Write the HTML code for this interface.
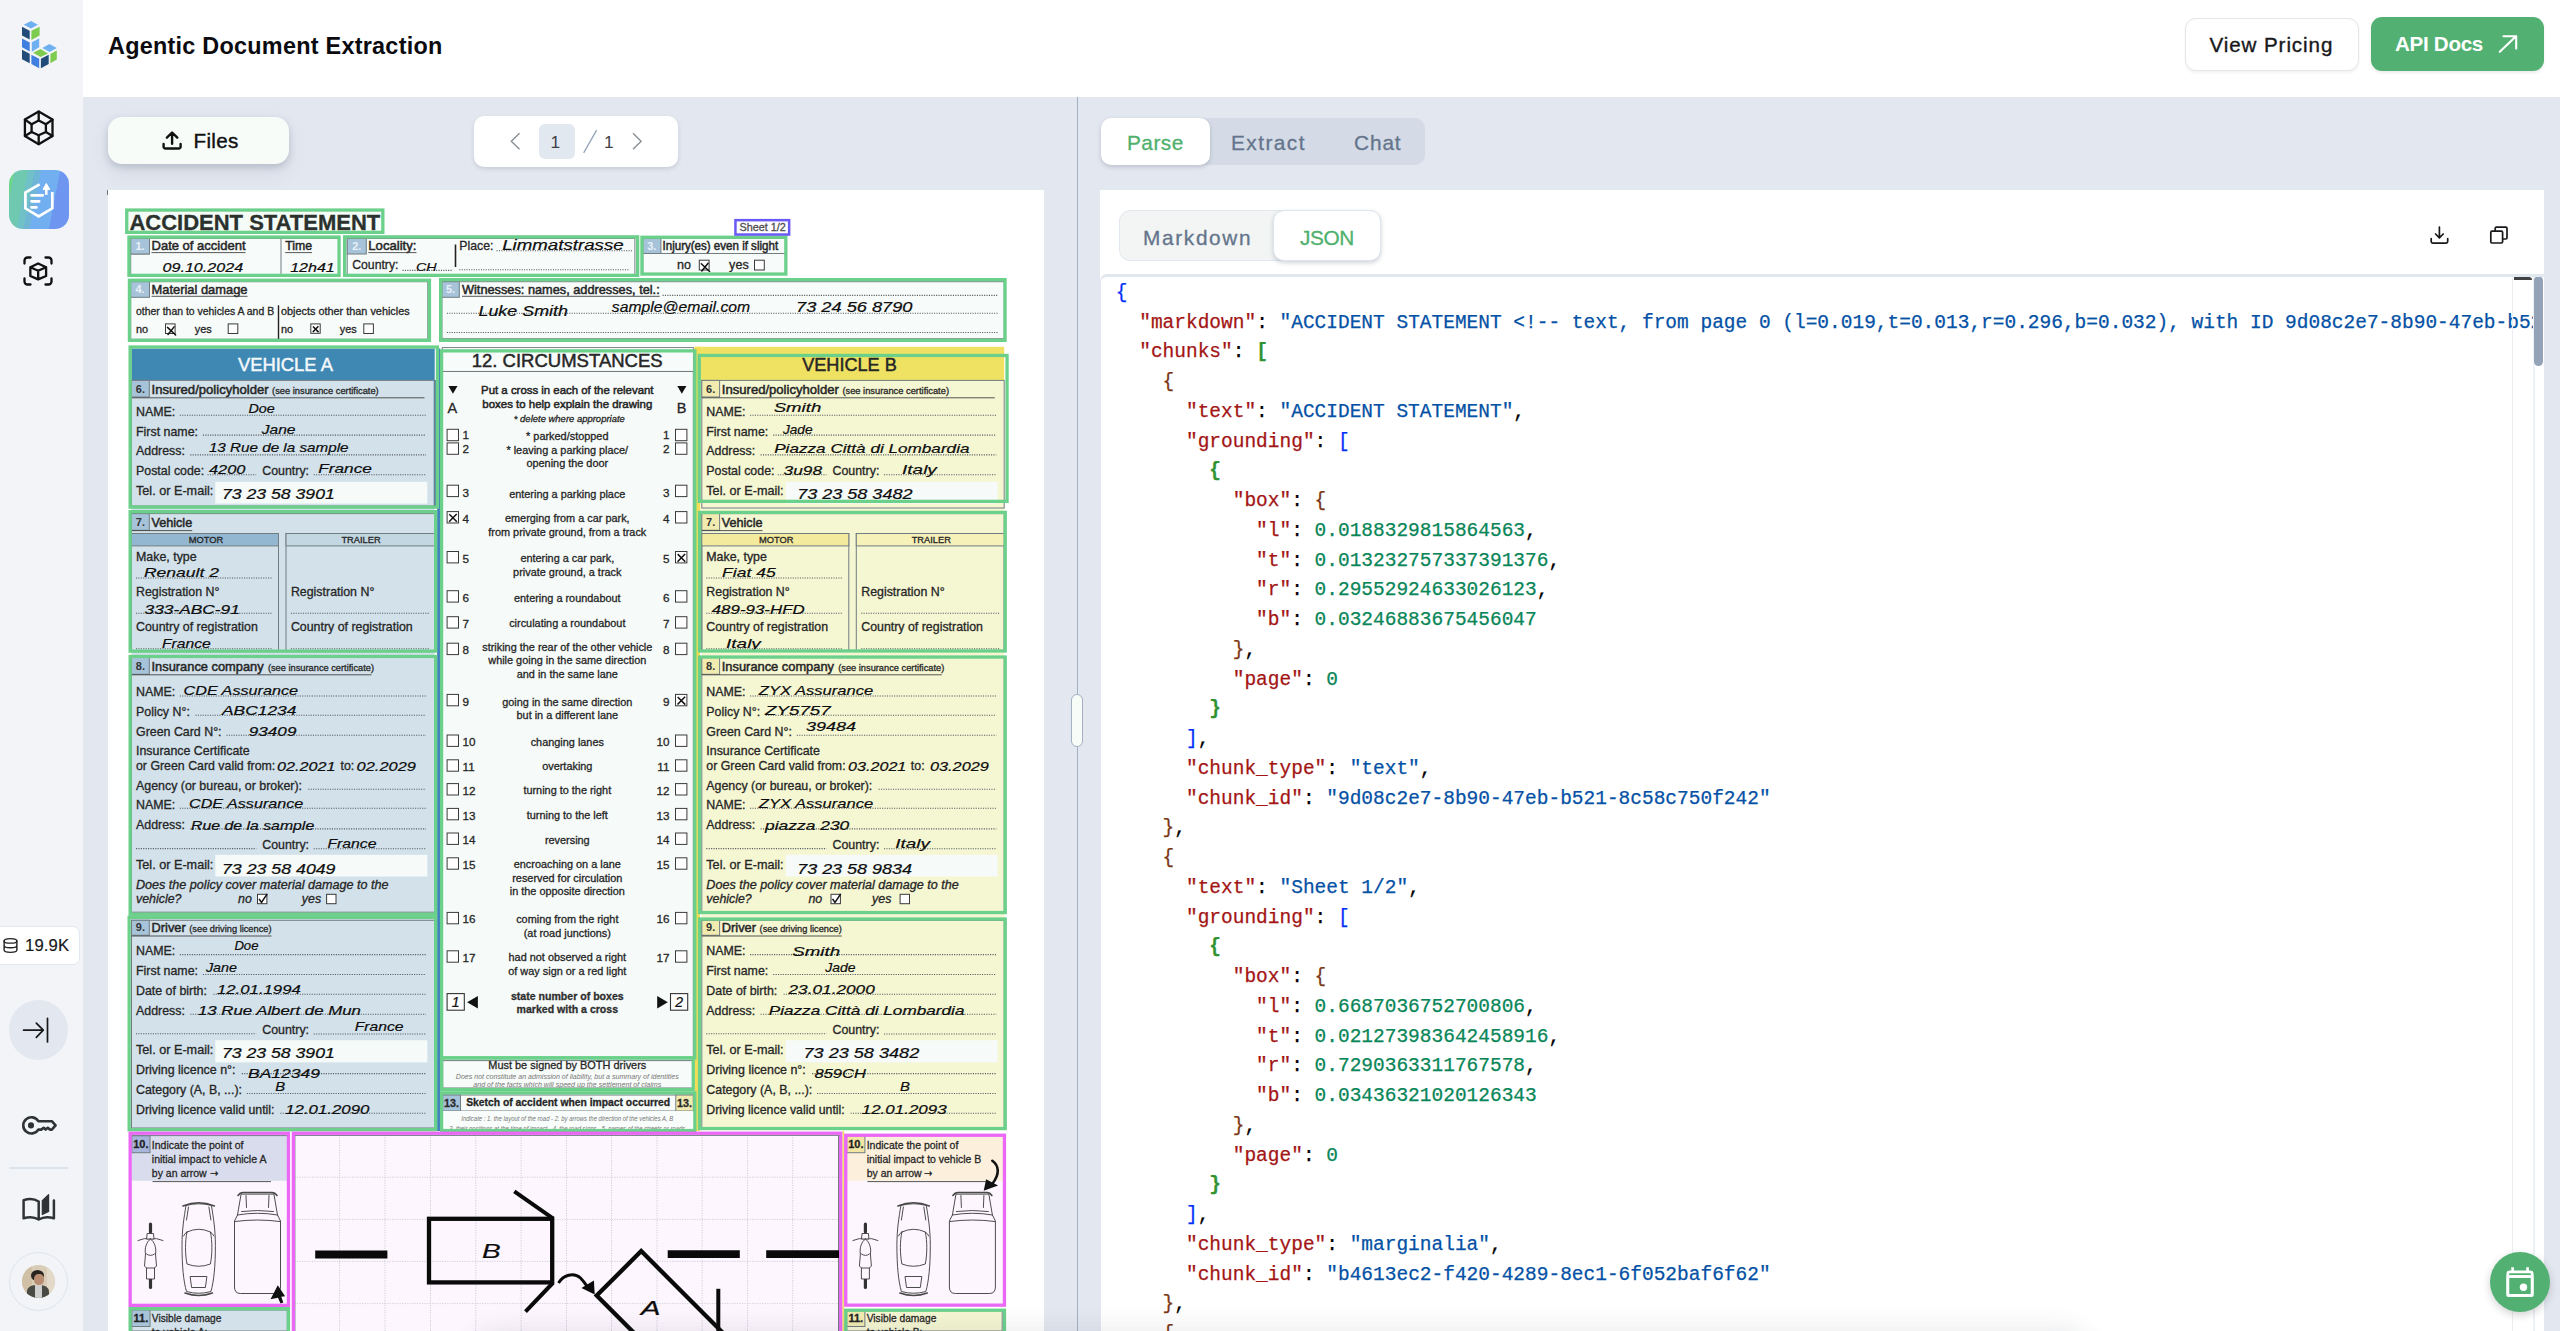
<!DOCTYPE html><html><head><meta charset="utf-8"><title>Agentic Document Extraction</title><style>
*{box-sizing:border-box;margin:0;padding:0}
html,body{width:2560px;height:1331px;overflow:hidden;background:#e3e7f0;font-family:"Liberation Sans",sans-serif;color:#111}
.a{position:absolute}
#side{left:0;top:0;width:83.2px;height:1331px;background:#f2f4f8}
#hdr{left:83.2px;top:0;width:2477px;height:96.7px;background:#fff}
#title{left:108px;top:32.2px;font-weight:700;font-size:23.4px;line-height:28px;letter-spacing:0.26px;color:#0b0b0f;white-space:nowrap}
.btn{border-radius:11px;font-size:20.6px;line-height:24px;white-space:nowrap}
#vp{left:2184.5px;top:17.5px;width:174.5px;height:53px;background:#fff;border:1.6px solid #e4e4ea;box-shadow:0 1.5px 3px rgba(0,0,0,.05)}
#vp span{left:24px;top:14.6px;color:#18181b;letter-spacing:.9px;-webkit-text-stroke:.35px #18181b}
#api{left:2371px;top:17px;width:172.5px;height:53.5px;background:#52b172;box-shadow:0 1.5px 3px rgba(0,0,0,.08)}
#api span{left:24px;top:14.8px;color:#fff;font-weight:700;letter-spacing:-.3px}
#files{left:107.5px;top:117px;width:181px;height:47px;border-radius:14px;background:#f7fcf9;box-shadow:0 3px 7px rgba(71,85,105,.22),0 8px 18px rgba(71,85,105,.10)}
#files span{left:86px;top:10.4px;font-size:20.6px;line-height:28px;color:#111;letter-spacing:.35px;-webkit-text-stroke:.4px #111}
#pager{left:473.5px;top:116px;width:204px;height:51px;border-radius:10px;background:#fff;box-shadow:0 2px 4px rgba(71,85,105,.18)}
#pgb{left:65.5px;top:7.5px;width:35.5px;height:35.5px;border-radius:6px;background:#e2e8f0}
.pn{font-size:17.4px;line-height:20px;color:#3f3f46;top:15.6px}
#tabs{left:1101px;top:117.5px;width:324px;height:47.5px;border-radius:10px;background:#d4dbe6}
#tabs .on{left:0;top:0;width:109px;height:47.5px;border-radius:10px;background:#fff;box-shadow:0 2px 4px rgba(71,85,105,.25)}
.tb{font-size:20.8px;line-height:24px;top:13.4px;color:#64748b;-webkit-text-stroke:.3px #64748b;white-space:nowrap}
#panel{left:1100px;top:190px;width:1443.5px;height:1141px;background:#fff;overflow:hidden}
#tog{left:18.5px;top:20px;width:262px;height:51px;border-radius:11px;background:#f2f5f4;border:1.5px solid #e2e8f0}
#tog .on{left:153px;top:-1.5px;width:108px;height:51px;border-radius:11px;background:#fff;border:1.5px solid #dfe5ee;box-shadow:0 2px 4px rgba(71,85,105,.25)}
#ed{left:0;top:84px;width:1443.5px;height:1060px;border-top:3px solid #e2e8f0;border-left:1.6px solid #e2e8f0;border-radius:7px 0 0 0;background:#fff;overflow:hidden}
pre{position:absolute;left:14.8px;top:1.9px;font-family:"Liberation Mono",monospace;font-size:19.49px;line-height:29.755px;color:#000;white-space:pre;-webkit-text-stroke:.25px}
.k{color:#a31515}.s{color:#0451a5}.n{color:#098658}.b1{color:#0431fa}.b2{color:#319331}.b3{color:#7b3814}
#doc{left:107.5px;top:190px;width:936.5px;height:1141px;background:#fff;overflow:hidden}
</style></head><body><div id="side" class="a"><svg class="a" style="left:0;top:0" width="83" height="96" viewBox="0 0 83 96"><polygon points="23.7,24.7 31,21 37.9,24.7 31,28.4" fill="#6fb0f0"/><polygon points="22,26.7 29.7,30.8 29.7,39.6 22,35.5" fill="#214b78"/><polygon points="31.4,30.8 39.6,26.7 39.6,35.5 31.4,39.9" fill="#7dcb4f"/><polygon points="22,38.5 29.7,42.6 29.7,51.4 22,47.3" fill="#3f7fe0"/><polygon points="31.8,42.3 39.2,38.5 39.2,47.3 31.8,51.7" fill="#6fb0f0"/><polygon points="22,49.7 29.7,53.8 29.7,63.2 22,59.2" fill="#214b78"/><polygon points="33.1,52.7 40.6,49 48,53.4 40.6,57.1" fill="#7dcb4f"/><polygon points="31.4,54.8 39.2,58.8 39.2,68.3 31.4,63.9" fill="#3f7fe0"/><polygon points="40.9,58.8 48.7,54.8 48.7,63.9 40.9,68.3" fill="#214b78"/><polygon points="42.3,48 49.4,43.9 56.8,48 49.7,52.1" fill="#6fb0f0"/><polygon points="50.4,54.1 56.8,50.4 56.8,59.5 50.4,63.2" fill="#7dcb4f"/></svg><svg class="a" style="left:0;top:96px" width="83" height="64" viewBox="0 96 83 64" fill="none" stroke="#111" stroke-width="2.3" stroke-linejoin="round" stroke-linecap="round">
<polygon points="38.7,111.6 52.5,119.6 52.5,136 38.7,144.2 24.9,136 24.9,119.6"/>
<polygon points="38.7,120.6 45.9,124.3 45.9,132 38.7,135.3 31.6,132 31.6,124.3"/>
<path d="M38.7 111.6V120.6M52.5 119.6L45.9 124.3M52.5 136L45.9 132M38.7 144.2V135.3M24.9 136L31.6 132M24.9 119.6L31.6 124.3"/></svg><div class="a" style="left:9px;top:169.5px;width:59.5px;height:59.5px;border-radius:14px;background:linear-gradient(101deg,#6dd58a 0,#6dd58a 7.7%,#6fc9b1 8.2%,#6fc9b1 26.6%,#70c0c8 27.1%,#70c0c8 35.9%,#6fb5d5 36.4%,#6fb5d5 44.7%,#72aff0 45.2%,#72aff0 71.5%,#6e95f0 72%,#6e95f0 100%)"></div>
<svg class="a" style="left:9px;top:169.5px" width="60" height="60" viewBox="9 169.5 60 60" fill="none" stroke="#fff" stroke-width="2.7" stroke-linecap="round" stroke-linejoin="miter">
<path d="M39.6 183.9L25.4 192V207.8L38.7 216L52.3 207.8V191.6" stroke-linecap="butt"/>
<path d="M31.5 194.8H42.8M31.5 200.8H39.2M31.5 206.9H36.4"/>
<path d="M46.3 194.3V187" stroke-width="2.6" stroke-linecap="butt"/>
<path d="M43.2 188.6L46.3 183L49.6 188.6Z" fill="#fff" stroke-width="1" stroke-linejoin="round"/></svg><svg class="a" style="left:20.4px;top:252.6px" width="36" height="36" viewBox="0 0 24 24" fill="none" stroke="#111" stroke-width="1.55" stroke-linecap="round" stroke-linejoin="round">
<path d="M3 7V5a2 2 0 0 1 2-2h2M17 3h2a2 2 0 0 1 2 2v2M21 17v2a2 2 0 0 1-2 2h-2M7 21H5a2 2 0 0 1-2-2v-2"/>
<path d="M12.1 7L17.4 9.5V15.3L12.1 17.6L6.9 15.3V9.5ZM6.9 9.5L12.1 11.8L17.4 9.5M12.1 11.8V17.6"/></svg><div class="a" style="left:-8px;top:926px;width:87.5px;height:38.5px;background:#fff;border:1.5px solid #e2e8f0;border-radius:7px"></div>
<svg class="a" style="left:2px;top:936.5px" width="17" height="17" viewBox="0 0 24 24" fill="none" stroke="#222" stroke-width="2" stroke-linecap="round" stroke-linejoin="round"><ellipse cx="12" cy="5.5" rx="9" ry="3.2"/><path d="M3 5.5v13c0 1.8 4 3.2 9 3.200s9-1.400 9-3.200v-13M3 12c0 1.800 4 3.200 9 3.200s9-1.400 9-3.200"/></svg>
<div class="a" style="left:25px;top:935.5px;font-size:16.7px;line-height:20px;color:#18181b;letter-spacing:.1px;-webkit-text-stroke:.2px #18181b">19.9K</div><div class="a" style="left:8.8px;top:1000.4px;width:59.6px;height:59.6px;border-radius:50%;background:#e3e8f0"></div>
<svg class="a" style="left:18px;top:1012px" width="40" height="36" viewBox="18 1012 40 36" fill="none" stroke="#18181b" stroke-width="1.7" stroke-linecap="round" stroke-linejoin="round"><path d="M23.6 1030.200H43.200M36.300 1023.100L43.300 1030.200L36.300 1037.300M47.500 1018.300V1042"/></svg><svg class="a" style="left:18px;top:1110px" width="44" height="32" viewBox="18 1110 44 32" fill="none" stroke="#2f3336" stroke-width="2.6" stroke-linejoin="round" stroke-linecap="round">
<path d="M38.300 1121.200A8.100 8.100 0 1 0 38.300 1129.600L41.500 1129.600L43.600 1127.800L45.700 1129.600L47.800 1127.800L49.900 1129.600H51.800L55.600 1125.400L51.800 1121.200Z"/><circle cx="31" cy="1125.400" r="2.300" fill="#2f3336" stroke-width="1.500"/></svg><div class="a" style="left:9px;top:1167.2px;width:59.3px;height:1.6px;background:#dde3ea"></div><svg class="a" style="left:18px;top:1188px" width="44" height="40" viewBox="18 1188 44 40" fill="none" stroke="#2f3336" stroke-width="2.5" stroke-linejoin="round" stroke-linecap="round">
<path d="M38.700 1219.500C34 1216.600 28.500 1216.700 23.600 1218.300V1200.300C28.500 1198.600 34 1198.600 38.700 1201.500ZM38.700 1219.500C43.400 1216.600 49 1216.700 53.900 1218.300V1200.600"/>
<path d="M42.300 1200.700L48.600 1194.600V1211.500L42.300 1214.500Z" fill="#2f3336" stroke-width="1.200"/></svg><div class="a" style="left:9px;top:1252px;width:59.3px;height:59.3px;border-radius:50%;border:1.5px solid #dfe5ec"></div>
<div class="a" style="left:21.8px;top:1264.800px;width:33.600px;height:33.600px;border-radius:50%;overflow:hidden;background:#d9cdb8">
<div class="a" style="left:0;top:0;width:10px;height:34px;background:#cfc0a6"></div>
<div class="a" style="left:25px;top:0;width:9px;height:34px;background:#e3d9c8"></div>
<div class="a" style="left:9px;top:5px;width:13px;height:11px;border-radius:50%;background:#2a2420"></div>
<div class="a" style="left:12.500px;top:9.500px;width:9.500px;height:11px;border-radius:45%;background:#b98d72"></div>
<div class="a" style="left:5px;top:20px;width:22px;height:16px;border-radius:40% 40% 0 0;background:#4a4a44"></div>
<div class="a" style="left:13px;top:20px;width:7px;height:14px;background:#cfcfcd"></div></div></div><div id="hdr" class="a"></div><div id="title" class="a">Agentic Document Extraction</div><div id="vp" class="a btn"><span class="a">View Pricing</span></div><div id="api" class="a btn"><span class="a">API Docs</span><svg class="a" style="left:126px;top:17px" width="22" height="20" viewBox="2497 34 22 20" fill="none" stroke="#fff" stroke-width="2.1" stroke-linecap="round" stroke-linejoin="round"><path d="M2499.800 51.800L2516 36.200M2503.500 36.200H2516.200V48.600"/></svg></div><div id="files" class="a"><svg class="a" style="left:53.500px;top:12.500px" width="22" height="21" viewBox="161 129.500 22 21" fill="none" stroke="#111" stroke-width="2.4" stroke-linecap="round" stroke-linejoin="round"><path d="M163.600 143.500V146.200A1.800 1.800 0 0 0 165.400 148H178.800A1.800 1.800 0 0 0 180.600 146.200V143.500M172.100 143.300V132.200M166.900 137.200L172.100 132L177.300 137.200"/></svg><span class="a">Files</span></div><div id="pager" class="a"><div id="pgb" class="a"></div>
<svg class="a" style="left:0;top:0" width="204" height="51" viewBox="473.500 116 204 51" fill="none" stroke="#8a8f96" stroke-width="1.400" stroke-linecap="square"><path d="M518.500 133.800L510.800 141.300L518.500 148.800M633 133.800L640.600 141.300L633 148.800"/><path d="M583.500 152.300L595.800 130.700" stroke="#94a3b8" stroke-width="1.300"/></svg>
<span class="a pn" style="left:77px">1</span><span class="a pn" style="left:130.500px">1</span></div><div id="tabs" class="a"><div class="a on"></div><span class="a tb" style="left:26px;color:#4fb06d;-webkit-text-stroke:.3px #4fb06d;letter-spacing:.5px">Parse</span><span class="a tb" style="left:130px;letter-spacing:1.450px">Extract</span><span class="a tb" style="left:253px;letter-spacing:.9px">Chat</span></div><div class="a" style="left:1076.700px;top:96.500px;width:1.500px;height:1240px;background:#a3b1c4"></div><div class="a" style="left:1071px;top:693.500px;width:11.500px;height:53px;border-radius:6px;background:#f7fcf9;border:1.300px solid #a3b1c4"></div><svg id="doc" class="a" width="936.500" height="1141" viewBox="107.500 190 936.500 1141"><style>text{font-family:"Liberation Sans",sans-serif;fill:#262626;stroke:#262626;stroke-width:.3px}
.m{stroke-width:.5px}.b{font-weight:700}.b2{font-weight:700;fill:#333}.w{fill:#f4f8fb;stroke:#f4f8fb;stroke-width:.45px}.t{stroke-width:.45px}.i{font-style:italic}.ig{font-style:italic;fill:#777;stroke:none}
.h{font-style:italic;fill:#0d0d0d;stroke:#0d0d0d;stroke-width:.2px}
.d{stroke:#565b60;stroke-width:1.100;stroke-dasharray:1.100 1.300;fill:none}
.g{stroke:#cfcfd6;stroke-width:1;stroke-dasharray:1.200 1.300;fill:none}</style><text x="128.9" y="230.3" font-size="22.6" class="b" textLength="250.9" lengthAdjust="spacingAndGlyphs">ACCIDENT STATEMENT</text><text x="739" y="231.4" font-size="11.4" textLength="46.4" lengthAdjust="spacingAndGlyphs" style="fill:#4d4d4d;stroke:#4d4d4d">Sheet 1/2</text><rect x="130.2" y="238.4" width="208.3" height="36.6" fill="#f7fbf9" stroke="#727d82" stroke-width="1"/><path d="M280.5 238.4L280.5 275" stroke="#727d82" stroke-width="1"/><path d="M130.2 254L149 254" stroke="#727d82" stroke-width="1"/><rect x="130.2" y="238.4" width="18.8" height="15.6" fill="#a6c3da" stroke="#727d82" stroke-width="1"/><text x="139.6" y="250" font-size="11" class="b" text-anchor="middle" style="fill:#e9f1f8;stroke:none">1.</text><text x="151" y="250.2" font-size="13" class="m" textLength="94" lengthAdjust="spacingAndGlyphs">Date of accident</text><path d="M151 252.6L245 252.6" stroke="#444" stroke-width="0.9"/><text x="284.7" y="250.2" font-size="13" class="m" textLength="26.8" lengthAdjust="spacingAndGlyphs">Time</text><path d="M284.7 252.6L311.5 252.6" stroke="#444" stroke-width="0.9"/><text x="162" y="271.8" font-size="12.9" class="h" textLength="80.6" lengthAdjust="spacingAndGlyphs">09.10.2024</text><text x="289.7" y="271.8" font-size="12.9" class="h" textLength="44.6" lengthAdjust="spacingAndGlyphs">12h41</text><rect x="346.7" y="238.4" width="287.7" height="36.6" fill="#f7fbf9" stroke="#727d82" stroke-width="1"/><rect x="346.7" y="238.4" width="19.1" height="15.6" fill="#a6c3da" stroke="#727d82" stroke-width="1"/><text x="356.25" y="250" font-size="11" class="b" text-anchor="middle" style="fill:#e9f1f8;stroke:none">2.</text><text x="367.8" y="250.2" font-size="13" class="m" textLength="48.2" lengthAdjust="spacingAndGlyphs">Locality:</text><path d="M367.8 252.6L416 252.6" stroke="#444" stroke-width="0.9"/><path d="M455 244.5L455 267" stroke="#222" stroke-width="1.6"/><text x="458.8" y="250.2" font-size="12.6" textLength="34.2" lengthAdjust="spacingAndGlyphs">Place:</text><path d="M496 250.8H632" class="d"/><text x="501.7" y="250.4" font-size="14" class="h" textLength="121.5" lengthAdjust="spacingAndGlyphs">Limmatstrasse</text><text x="351.7" y="269.4" font-size="12.6" textLength="46.3" lengthAdjust="spacingAndGlyphs">Country:</text><path d="M402 270.4H452" class="d"/><text x="415.4" y="271.4" font-size="11.5" class="h" textLength="20.6" lengthAdjust="spacingAndGlyphs">CH</text><path d="M458.8 269.8H628" class="d"/><rect x="642.3" y="238.3" width="142.7" height="35.5" fill="#f7fbf9" stroke="#727d82" stroke-width="1"/><path d="M642.3 253.5L785 253.5" stroke="#727d82" stroke-width="1"/><rect x="642.3" y="238.3" width="18.1" height="15.2" fill="#a6c3da" stroke="#727d82" stroke-width="1"/><text x="651.35" y="249.5" font-size="11" class="b" text-anchor="middle" style="fill:#e9f1f8;stroke:none">3.</text><text x="662" y="250.2" font-size="12.6" class="m" textLength="115.6" lengthAdjust="spacingAndGlyphs">Injury(es) even if slight</text><text x="676.5" y="269.3" font-size="12.6">no</text><rect x="698.8" y="260.2" width="9.8" height="9.8" fill="#fdfefd" stroke="#3a3a3a" stroke-width="1"/><path d="M700.8 263.7L709.1 271.5M707.6 263.2L701.3 271" stroke="#111" stroke-width="1.5" stroke-linecap="round"/><text x="728.6" y="269.3" font-size="12.6">yes</text><rect x="754" y="260.2" width="9.8" height="9.8" fill="#fdfefd" stroke="#3a3a3a" stroke-width="1"/><rect x="130.2" y="281.7" width="297.1" height="57.6" fill="#f7fbf9" stroke="#727d82" stroke-width="1"/><rect x="130.2" y="281.7" width="18.8" height="15.6" fill="#a6c3da" stroke="#727d82" stroke-width="1"/><text x="139.6" y="293.3" font-size="11" class="b" text-anchor="middle" style="fill:#e9f1f8;stroke:none">4.</text><text x="151" y="293.7" font-size="13" class="m" textLength="96" lengthAdjust="spacingAndGlyphs">Material damage</text><path d="M151 296.3L247 296.3" stroke="#444" stroke-width="0.9"/><text x="135.5" y="314.8" font-size="10.9" textLength="138.1" lengthAdjust="spacingAndGlyphs">other than to vehicles A and B</text><path d="M278 305.3L278 339.3" stroke="#222" stroke-width="1.4"/><text x="280.5" y="314.8" font-size="10.9" textLength="128.7" lengthAdjust="spacingAndGlyphs">objects other than vehicles</text><text x="135.5" y="333.3" font-size="10.9">no</text><rect x="165" y="323.9" width="9.6" height="9.6" fill="#fdfefd" stroke="#3a3a3a" stroke-width="1"/><path d="M167 327.4L175.1 335M173.6 326.9L167.5 334.5" stroke="#111" stroke-width="1.5" stroke-linecap="round"/><text x="194.2" y="333.3" font-size="10.9">yes</text><rect x="227.7" y="323.9" width="9.6" height="9.6" fill="#fdfefd" stroke="#3a3a3a" stroke-width="1"/><text x="280.5" y="333.3" font-size="10.9">no</text><rect x="310.3" y="323.9" width="9.4" height="9.4" fill="#fdfefd" stroke="#3a3a3a" stroke-width="1"/><path d="M312.5 326.5L318.1 332.1M317.9 326.3L312.3 332.1" stroke="#111" stroke-width="1.5"/><text x="339.3" y="333.3" font-size="10.9">yes</text><rect x="363.3" y="323.9" width="9.6" height="9.6" fill="#fdfefd" stroke="#3a3a3a" stroke-width="1"/><rect x="441.4" y="281.7" width="562.3" height="57" fill="#f7fbf9" stroke="#727d82" stroke-width="1"/><rect x="441.4" y="281.7" width="17.4" height="15.6" fill="#a6c3da" stroke="#727d82" stroke-width="1"/><text x="450.1" y="293.3" font-size="11" class="b" text-anchor="middle" style="fill:#e9f1f8;stroke:none">5.</text><text x="461.5" y="293.7" font-size="13" class="m" textLength="197.7" lengthAdjust="spacingAndGlyphs">Witnesses: names, addresses, tel.:</text><path d="M461.5 296.3L659.2 296.3" stroke="#444" stroke-width="0.9"/><path d="M662 295.4H997.5" class="d"/><path d="M446.4 313.2H997.5" class="d"/><path d="M446.4 332.5H997.5" class="d"/><text x="478" y="316.3" font-size="13.8" class="h" textLength="89.4" lengthAdjust="spacingAndGlyphs">Luke Smith</text><text x="611.3" y="311.5" font-size="13.8" class="h" textLength="138.3" lengthAdjust="spacingAndGlyphs">sample@email.com</text><text x="795.5" y="311.5" font-size="14" class="h" textLength="116.5" lengthAdjust="spacingAndGlyphs">73 24 56 8790</text><rect x="131" y="380" width="303" height="748" fill="#d2e1ea"/><rect x="131" y="348.5" width="303.2" height="31.5" fill="#4088b4"/><text x="284.9" y="371.1" font-size="18.2" text-anchor="middle" class="w" textLength="95" lengthAdjust="spacingAndGlyphs">VEHICLE A</text><rect x="436.6" y="348.5" width="3" height="782.5" fill="#3f7fc0"/><rect x="433.2" y="380" width="2.2" height="127" fill="#3b7fb0"/><rect x="131" y="380.4" width="303" height="125.6" fill="none" stroke="#727d82" stroke-width="1"/><rect x="131" y="380.4" width="17.8" height="16.6" fill="#a6c3da" stroke="#727d82" stroke-width="1"/><text x="139.9" y="393" font-size="11" class="b" text-anchor="middle" style="fill:#333;stroke:none">6.</text><text x="151" y="394.2" font-size="13" class="m" textLength="117.1" lengthAdjust="spacingAndGlyphs">Insured/policyholder</text><text x="271.6" y="394" font-size="9.3" textLength="106.6" lengthAdjust="spacingAndGlyphs">(see insurance certificate)</text><path d="M131 397.8L424 397.8" stroke="#444" stroke-width="0.9"/><text x="135.5" y="415.6" font-size="12.4">NAME:</text><path d="M179.3 415.2H425.5" class="d"/><text x="135.5" y="435.5" font-size="12.4">First name:</text><path d="M202.4 435.1H425.5" class="d"/><text x="135.5" y="455.3" font-size="12.4">Address:</text><path d="M189.8 454.9H425.5" class="d"/><text x="135.5" y="475.1" font-size="12.4">Postal code:</text><path d="M207 474.7H255.7" class="d"/><text x="261.7" y="475.1" font-size="12.4">Country:</text><path d="M313.2 474.7H425.5" class="d"/><text x="135.5" y="494.5" font-size="12.4" textLength="77.3" lengthAdjust="spacingAndGlyphs">Tel. or E-mail:</text><rect x="214.8" y="481.8" width="212" height="21.8" fill="#f6fbf9"/><rect x="131" y="513.6" width="303" height="137.2" fill="none" stroke="#727d82" stroke-width="1"/><rect x="131" y="513.6" width="17.8" height="16.7" fill="#a6c3da" stroke="#727d82" stroke-width="1"/><text x="139.9" y="526.3" font-size="11" class="b" text-anchor="middle" style="fill:#333;stroke:none">7.</text><text x="151" y="526.9" font-size="13" class="m" textLength="40.7" lengthAdjust="spacingAndGlyphs">Vehicle</text><path d="M131 530.6L191.7 530.6" stroke="#444" stroke-width="0.9"/><rect x="131" y="533.5" width="147" height="117.3" fill="none" stroke="#727d82" stroke-width="1"/><rect x="131" y="533.5" width="147" height="12.4" fill="#93b6d1" stroke="#727d82" stroke-width="1"/><rect x="285.5" y="533.5" width="148.5" height="117.3" fill="none" stroke="#727d82" stroke-width="1"/><rect x="285.5" y="533.5" width="148.5" height="12.4" fill="#c3d7e3" stroke="#727d82" stroke-width="1"/><text x="205.5" y="543.4" font-size="9" text-anchor="middle" textLength="34.5" lengthAdjust="spacingAndGlyphs">MOTOR</text><text x="360.5" y="543.4" font-size="9" text-anchor="middle" textLength="39.2" lengthAdjust="spacingAndGlyphs">TRAILER</text><text x="135.5" y="560.7" font-size="12.4">Make, type</text><path d="M135.5 578H271" class="d"/><text x="135.5" y="596" font-size="12.4">Registration N°</text><path d="M135.5 613.3H271" class="d"/><text x="135.5" y="631.4" font-size="12.4" textLength="121.8" lengthAdjust="spacingAndGlyphs">Country of registration</text><path d="M135.5 648.8H271" class="d"/><text x="290.4" y="596" font-size="12.4">Registration N°</text><path d="M290.4 613.3H429" class="d"/><text x="290.4" y="631.4" font-size="12.4" textLength="121.8" lengthAdjust="spacingAndGlyphs">Country of registration</text><path d="M290.4 648.8H429" class="d"/><rect x="131" y="657.5" width="303" height="254.7" fill="none" stroke="#727d82" stroke-width="1"/><rect x="131" y="657.5" width="17.8" height="16.8" fill="#a6c3da" stroke="#727d82" stroke-width="1"/><text x="139.9" y="670.3" font-size="11" class="b" text-anchor="middle" style="fill:#333;stroke:none">8.</text><text x="151" y="671.2" font-size="13" class="m" textLength="112.2" lengthAdjust="spacingAndGlyphs">Insurance company</text><text x="267.4" y="671" font-size="9.3" textLength="106.1" lengthAdjust="spacingAndGlyphs">(see insurance certificate)</text><path d="M131 674.8L371 674.8" stroke="#444" stroke-width="0.9"/><text x="135.5" y="696.4" font-size="12.4">NAME:</text><path d="M179.3 696H425.5" class="d"/><text x="135.5" y="715.7" font-size="12.4">Policy N°:</text><path d="M195 715.3H425.5" class="d"/><text x="135.5" y="735.6" font-size="12.4">Green Card N°:</text><path d="M226 735.2H425.5" class="d"/><text x="135.5" y="755.4" font-size="12.4">Insurance Certificate</text><text x="135.5" y="769.8" font-size="12.4" textLength="139.3" lengthAdjust="spacingAndGlyphs">or Green Card valid from:</text><text x="340" y="769.8" font-size="12.4">to:</text><text x="135.5" y="789.6" font-size="12.4" textLength="166" lengthAdjust="spacingAndGlyphs">Agency (or bureau, or broker):</text><path d="M307.8 789.2H425.5" class="d"/><text x="135.5" y="808.7" font-size="12.4">NAME:</text><path d="M179.3 808.3H425.5" class="d"/><text x="135.5" y="829.3" font-size="12.4">Address:</text><path d="M189.8 828.9H425.5" class="d"/><path d="M135.5 848.6H255.7" class="d"/><text x="261.7" y="849.2" font-size="12.4">Country:</text><path d="M313.2 848.8H425.5" class="d"/><text x="135.5" y="869" font-size="12.4" textLength="77.3" lengthAdjust="spacingAndGlyphs">Tel. or E-mail:</text><rect x="214.8" y="854.8" width="212" height="21.7" fill="#f6fbf9"/><text x="135.5" y="888.8" font-size="12.4" class="i" textLength="252.5" lengthAdjust="spacingAndGlyphs">Does the policy cover material damage to the</text><text x="135.5" y="903" font-size="12.4" class="i">vehicle?</text><text x="237.6" y="903" font-size="12.4" class="i">no</text><rect x="257" y="894.3" width="9.4" height="9.4" fill="#fdfefd" stroke="#3a3a3a" stroke-width="1"/><path d="M258.5 898.8L261 902.5L266.7 893.8" stroke="#111" stroke-width="1.5" fill="none"/><text x="301.3" y="903" font-size="12.4" class="i">yes</text><rect x="326.1" y="894.3" width="9.4" height="9.4" fill="#fdfefd" stroke="#3a3a3a" stroke-width="1"/><rect x="131" y="920.3" width="303" height="207.7" fill="none" stroke="#727d82" stroke-width="1"/><rect x="131" y="920.3" width="17.8" height="15" fill="#a6c3da" stroke="#727d82" stroke-width="1"/><text x="139.9" y="931.3" font-size="11" class="b" text-anchor="middle" style="fill:#333;stroke:none">9.</text><text x="151" y="932.2" font-size="13" class="m" textLength="34.2" lengthAdjust="spacingAndGlyphs">Driver</text><text x="188.8" y="932" font-size="9.3" textLength="82.2" lengthAdjust="spacingAndGlyphs">(see driving licence)</text><path d="M131 936L271 936" stroke="#444" stroke-width="0.9"/><text x="135.5" y="955" font-size="12.4">NAME:</text><path d="M179.3 954.6H425.5" class="d"/><text x="135.5" y="974.9" font-size="12.4">First name:</text><path d="M202.4 974.5H425.5" class="d"/><text x="135.5" y="994.7" font-size="12.4">Date of birth:</text><path d="M212.8 994.3H425.5" class="d"/><text x="135.5" y="1014.6" font-size="12.4">Address:</text><path d="M189.8 1014.2H425.5" class="d"/><path d="M135.5 1033.8H255.7" class="d"/><text x="261.7" y="1034.4" font-size="12.4">Country:</text><path d="M313.2 1034H425.5" class="d"/><text x="135.5" y="1054.2" font-size="12.4" textLength="77.3" lengthAdjust="spacingAndGlyphs">Tel. or E-mail:</text><rect x="214.8" y="1040.2" width="212" height="22.2" fill="#f6fbf9"/><text x="135.5" y="1074" font-size="12.4" textLength="99.5" lengthAdjust="spacingAndGlyphs">Driving licence n°:</text><path d="M241.3 1073.6H425.5" class="d"/><text x="135.5" y="1093.9" font-size="12.4" textLength="106" lengthAdjust="spacingAndGlyphs">Category (A, B, ...):</text><path d="M246.3 1093.5H425.5" class="d"/><text x="135.5" y="1113.7" font-size="12.4" textLength="138.5" lengthAdjust="spacingAndGlyphs">Driving licence valid until:</text><path d="M279.8 1113.3H425.5" class="d"/><rect x="701.3" y="380" width="302.4" height="748" fill="#f5f6d2"/><rect x="694" y="346.8" width="309.7" height="33.4" fill="#efe262"/><text x="849" y="371.1" font-size="18.2" text-anchor="middle" class="t" textLength="94.7" lengthAdjust="spacingAndGlyphs">VEHICLE B</text><rect x="694" y="346.8" width="5.5" height="784.2" fill="#f2de55"/><rect x="699.5" y="503" width="304.2" height="8" fill="#f5f6d2"/><rect x="701.3" y="380.4" width="302.4" height="127.6" fill="none" stroke="#727d82" stroke-width="1"/><rect x="701.3" y="380.4" width="17.8" height="16.6" fill="#f1ebb0" stroke="#727d82" stroke-width="1"/><text x="710.2" y="393" font-size="11" class="b" text-anchor="middle" style="fill:#333;stroke:none">6.</text><text x="721.3" y="394.2" font-size="13" class="m" textLength="117.1" lengthAdjust="spacingAndGlyphs">Insured/policyholder</text><text x="841.9" y="394" font-size="9.3" textLength="106.6" lengthAdjust="spacingAndGlyphs">(see insurance certificate)</text><path d="M701.3 397.8L994.3 397.8" stroke="#444" stroke-width="0.9"/><text x="705.8" y="415.6" font-size="12.4">NAME:</text><path d="M749.6 415.2H995.8" class="d"/><text x="705.8" y="435.5" font-size="12.4">First name:</text><path d="M772.7 435.1H995.8" class="d"/><text x="705.8" y="455.3" font-size="12.4">Address:</text><path d="M760.1 454.9H995.8" class="d"/><text x="705.8" y="475.1" font-size="12.4">Postal code:</text><path d="M777.3 474.7H826" class="d"/><text x="832" y="475.1" font-size="12.4">Country:</text><path d="M883.5 474.7H995.8" class="d"/><text x="705.8" y="494.5" font-size="12.4" textLength="77.3" lengthAdjust="spacingAndGlyphs">Tel. or E-mail:</text><rect x="785.1" y="481.8" width="212" height="21.8" fill="#f6fbf9"/><rect x="701.3" y="513.6" width="302.4" height="137.2" fill="none" stroke="#727d82" stroke-width="1"/><rect x="701.3" y="513.6" width="17.8" height="16.7" fill="#f1ebb0" stroke="#727d82" stroke-width="1"/><text x="710.2" y="526.3" font-size="11" class="b" text-anchor="middle" style="fill:#333;stroke:none">7.</text><text x="721.3" y="526.9" font-size="13" class="m" textLength="40.7" lengthAdjust="spacingAndGlyphs">Vehicle</text><path d="M701.3 530.6L762 530.6" stroke="#444" stroke-width="0.9"/><rect x="701.3" y="533.5" width="147" height="117.3" fill="none" stroke="#727d82" stroke-width="1"/><rect x="701.3" y="533.5" width="147" height="12.4" fill="#f3ea9e" stroke="#727d82" stroke-width="1"/><rect x="855.8" y="533.5" width="147.9" height="117.3" fill="none" stroke="#727d82" stroke-width="1"/><rect x="855.8" y="533.5" width="147.9" height="12.4" fill="#f5f1b9" stroke="#727d82" stroke-width="1"/><text x="775.8" y="543.4" font-size="9" text-anchor="middle" textLength="34.5" lengthAdjust="spacingAndGlyphs">MOTOR</text><text x="930.8" y="543.4" font-size="9" text-anchor="middle" textLength="39.2" lengthAdjust="spacingAndGlyphs">TRAILER</text><text x="705.8" y="560.7" font-size="12.4">Make, type</text><path d="M705.8 578H841.3" class="d"/><text x="705.8" y="596" font-size="12.4">Registration N°</text><path d="M705.8 613.3H841.3" class="d"/><text x="705.8" y="631.4" font-size="12.4" textLength="121.8" lengthAdjust="spacingAndGlyphs">Country of registration</text><path d="M705.8 648.8H841.3" class="d"/><text x="860.7" y="596" font-size="12.4">Registration N°</text><path d="M860.7 613.3H999.3" class="d"/><text x="860.7" y="631.4" font-size="12.4" textLength="121.8" lengthAdjust="spacingAndGlyphs">Country of registration</text><path d="M860.7 648.8H999.3" class="d"/><rect x="701.3" y="657.5" width="302.4" height="254.7" fill="none" stroke="#727d82" stroke-width="1"/><rect x="701.3" y="657.5" width="17.8" height="16.8" fill="#f1ebb0" stroke="#727d82" stroke-width="1"/><text x="710.2" y="670.3" font-size="11" class="b" text-anchor="middle" style="fill:#333;stroke:none">8.</text><text x="721.3" y="671.2" font-size="13" class="m" textLength="112.2" lengthAdjust="spacingAndGlyphs">Insurance company</text><text x="837.7" y="671" font-size="9.3" textLength="106.1" lengthAdjust="spacingAndGlyphs">(see insurance certificate)</text><path d="M701.3 674.8L941.3 674.8" stroke="#444" stroke-width="0.9"/><text x="705.8" y="696.4" font-size="12.4">NAME:</text><path d="M749.6 696H995.8" class="d"/><text x="705.8" y="715.7" font-size="12.4">Policy N°:</text><path d="M765.3 715.3H995.8" class="d"/><text x="705.8" y="735.6" font-size="12.4">Green Card N°:</text><path d="M796.3 735.2H995.8" class="d"/><text x="705.8" y="755.4" font-size="12.4">Insurance Certificate</text><text x="705.8" y="769.8" font-size="12.4" textLength="139.3" lengthAdjust="spacingAndGlyphs">or Green Card valid from:</text><text x="910.3" y="769.8" font-size="12.4">to:</text><text x="705.8" y="789.6" font-size="12.4" textLength="166" lengthAdjust="spacingAndGlyphs">Agency (or bureau, or broker):</text><path d="M878.1 789.2H995.8" class="d"/><text x="705.8" y="808.7" font-size="12.4">NAME:</text><path d="M749.6 808.3H995.8" class="d"/><text x="705.8" y="829.3" font-size="12.4">Address:</text><path d="M760.1 828.9H995.8" class="d"/><path d="M705.8 848.6H826" class="d"/><text x="832" y="849.2" font-size="12.4">Country:</text><path d="M883.5 848.8H995.8" class="d"/><text x="705.8" y="869" font-size="12.4" textLength="77.3" lengthAdjust="spacingAndGlyphs">Tel. or E-mail:</text><rect x="785.1" y="854.8" width="212" height="21.7" fill="#f6fbf9"/><text x="705.8" y="888.8" font-size="12.4" class="i" textLength="252.5" lengthAdjust="spacingAndGlyphs">Does the policy cover material damage to the</text><text x="705.8" y="903" font-size="12.4" class="i">vehicle?</text><text x="807.9" y="903" font-size="12.4" class="i">no</text><rect x="830.5" y="894.3" width="9.4" height="9.4" fill="#fdfefd" stroke="#3a3a3a" stroke-width="1"/><path d="M832 898.8L834.5 902.5L840.2 893.8" stroke="#111" stroke-width="1.5" fill="none"/><text x="871.6" y="903" font-size="12.4" class="i">yes</text><rect x="899.6" y="894.3" width="9.4" height="9.4" fill="#fdfefd" stroke="#3a3a3a" stroke-width="1"/><rect x="701.3" y="920.3" width="302.4" height="207.7" fill="none" stroke="#727d82" stroke-width="1"/><rect x="701.3" y="920.3" width="17.8" height="15" fill="#f1ebb0" stroke="#727d82" stroke-width="1"/><text x="710.2" y="931.3" font-size="11" class="b" text-anchor="middle" style="fill:#333;stroke:none">9.</text><text x="721.3" y="932.2" font-size="13" class="m" textLength="34.2" lengthAdjust="spacingAndGlyphs">Driver</text><text x="759.1" y="932" font-size="9.3" textLength="82.2" lengthAdjust="spacingAndGlyphs">(see driving licence)</text><path d="M701.3 936L841.3 936" stroke="#444" stroke-width="0.9"/><text x="705.8" y="955" font-size="12.4">NAME:</text><path d="M749.6 954.6H995.8" class="d"/><text x="705.8" y="974.9" font-size="12.4">First name:</text><path d="M772.7 974.5H995.8" class="d"/><text x="705.8" y="994.7" font-size="12.4">Date of birth:</text><path d="M783.1 994.3H995.8" class="d"/><text x="705.8" y="1014.6" font-size="12.4">Address:</text><path d="M760.1 1014.2H995.8" class="d"/><path d="M705.8 1033.8H826" class="d"/><text x="832" y="1034.4" font-size="12.4">Country:</text><path d="M883.5 1034H995.8" class="d"/><text x="705.8" y="1054.2" font-size="12.4" textLength="77.3" lengthAdjust="spacingAndGlyphs">Tel. or E-mail:</text><rect x="785.1" y="1040.2" width="212" height="22.2" fill="#f6fbf9"/><text x="705.8" y="1074" font-size="12.4" textLength="99.5" lengthAdjust="spacingAndGlyphs">Driving licence n°:</text><path d="M811.6 1073.6H995.8" class="d"/><text x="705.8" y="1093.9" font-size="12.4" textLength="106" lengthAdjust="spacingAndGlyphs">Category (A, B, ...):</text><path d="M816.6 1093.5H995.8" class="d"/><text x="705.8" y="1113.7" font-size="12.4" textLength="138.5" lengthAdjust="spacingAndGlyphs">Driving licence valid until:</text><path d="M850.1 1113.3H995.8" class="d"/><text x="248" y="413" font-size="13.2" class="h" textLength="26.3" lengthAdjust="spacingAndGlyphs">Doe</text><text x="261.2" y="433.5" font-size="13.2" class="h" textLength="33.8" lengthAdjust="spacingAndGlyphs">Jane</text><text x="208.4" y="452.3" font-size="13.2" class="h" textLength="139.6" lengthAdjust="spacingAndGlyphs">13 Rue de la sample</text><text x="208.4" y="474" font-size="13.2" class="h" textLength="36.6" lengthAdjust="spacingAndGlyphs">4200</text><text x="317.7" y="473.2" font-size="13.2" class="h" textLength="53.8" lengthAdjust="spacingAndGlyphs">France</text><text x="221.5" y="498.7" font-size="14.2" class="h" textLength="112.8" lengthAdjust="spacingAndGlyphs">73 23 58 3901</text><text x="143.4" y="576.9" font-size="13.2" class="h" textLength="75.1" lengthAdjust="spacingAndGlyphs">Renault 2</text><text x="144" y="614" font-size="13.2" class="h" textLength="95.3" lengthAdjust="spacingAndGlyphs">333-ABC-91</text><text x="161.5" y="648" font-size="13.2" class="h" textLength="48.8" lengthAdjust="spacingAndGlyphs">France</text><text x="183" y="695" font-size="13.2" class="h" textLength="114.6" lengthAdjust="spacingAndGlyphs">CDE Assurance</text><text x="221.5" y="714.5" font-size="13.2" class="h" textLength="74.4" lengthAdjust="spacingAndGlyphs">ABC1234</text><text x="248.3" y="735.6" font-size="13.2" class="h" textLength="47.6" lengthAdjust="spacingAndGlyphs">93409</text><text x="276.5" y="770.8" font-size="13.2" class="h" textLength="58.5" lengthAdjust="spacingAndGlyphs">02.2021</text><text x="356.1" y="770.8" font-size="13.2" class="h" textLength="59.3" lengthAdjust="spacingAndGlyphs">02.2029</text><text x="188.5" y="808" font-size="13.2" class="h" textLength="114.3" lengthAdjust="spacingAndGlyphs">CDE Assurance</text><text x="190.5" y="829.8" font-size="13.2" class="h" textLength="123.2" lengthAdjust="spacingAndGlyphs">Rue de la sample</text><text x="326.9" y="848.4" font-size="13.2" class="h" textLength="49.1" lengthAdjust="spacingAndGlyphs">France</text><text x="221.5" y="874" font-size="14.2" class="h" textLength="113.5" lengthAdjust="spacingAndGlyphs">73 23 58 4049</text><text x="233.9" y="950" font-size="13.2" class="h" textLength="24.1" lengthAdjust="spacingAndGlyphs">Doe</text><text x="205.4" y="972.4" font-size="13.2" class="h" textLength="31" lengthAdjust="spacingAndGlyphs">Jane</text><text x="216.5" y="994" font-size="13.2" class="h" textLength="83.8" lengthAdjust="spacingAndGlyphs">12.01.1994</text><text x="197.4" y="1014.6" font-size="13.2" class="h" textLength="163" lengthAdjust="spacingAndGlyphs">13 Rue Albert de Mun</text><text x="354.2" y="1031.4" font-size="13.2" class="h" textLength="48.8" lengthAdjust="spacingAndGlyphs">France</text><text x="221.5" y="1058" font-size="14.2" class="h" textLength="112.8" lengthAdjust="spacingAndGlyphs">73 23 58 3901</text><text x="247.5" y="1077.8" font-size="13.2" class="h" textLength="71.9" lengthAdjust="spacingAndGlyphs">BA12349</text><text x="274.8" y="1091.4" font-size="13.2" class="h" textLength="9.9" lengthAdjust="spacingAndGlyphs">B</text><text x="284.7" y="1113.7" font-size="13.2" class="h" textLength="84.3" lengthAdjust="spacingAndGlyphs">12.01.2090</text><text x="773.2" y="411.9" font-size="13.2" class="h" textLength="47.6" lengthAdjust="spacingAndGlyphs">Smith</text><text x="782.4" y="434.2" font-size="13.2" class="h" textLength="29.7" lengthAdjust="spacingAndGlyphs">Jade</text><text x="773.7" y="452.8" font-size="13.2" class="h" textLength="195.3" lengthAdjust="spacingAndGlyphs">Piazza Città di Lombardia</text><text x="783.1" y="474.6" font-size="13.2" class="h" textLength="38.4" lengthAdjust="spacingAndGlyphs">3u98</text><text x="901.6" y="473.6" font-size="13.2" class="h" textLength="34.7" lengthAdjust="spacingAndGlyphs">Italy</text><text x="796.7" y="498.7" font-size="14.2" class="h" textLength="115.3" lengthAdjust="spacingAndGlyphs">73 23 58 3482</text><text x="721.6" y="576.9" font-size="13.2" class="h" textLength="53.6" lengthAdjust="spacingAndGlyphs">Fiat 45</text><text x="711.2" y="614" font-size="13.2" class="h" textLength="93" lengthAdjust="spacingAndGlyphs">489-93-HFD</text><text x="725.6" y="648" font-size="13.2" class="h" textLength="34.7" lengthAdjust="spacingAndGlyphs">Italy</text><text x="758.3" y="695" font-size="13.2" class="h" textLength="114.5" lengthAdjust="spacingAndGlyphs">ZYX Assurance</text><text x="764.5" y="714.5" font-size="13.2" class="h" textLength="65.7" lengthAdjust="spacingAndGlyphs">ZY5757</text><text x="805.4" y="730.5" font-size="13.2" class="h" textLength="50.1" lengthAdjust="spacingAndGlyphs">39484</text><text x="847.6" y="770.8" font-size="13.2" class="h" textLength="58.2" lengthAdjust="spacingAndGlyphs">03.2021</text><text x="929.4" y="770.8" font-size="13.2" class="h" textLength="59" lengthAdjust="spacingAndGlyphs">03.2029</text><text x="758.3" y="808" font-size="13.2" class="h" textLength="114.5" lengthAdjust="spacingAndGlyphs">ZYX Assurance</text><text x="764.5" y="829.8" font-size="13.2" class="h" textLength="84.3" lengthAdjust="spacingAndGlyphs">piazza 230</text><text x="894.7" y="848.4" font-size="13.2" class="h" textLength="34.7" lengthAdjust="spacingAndGlyphs">Italy</text><text x="796.7" y="874" font-size="14.2" class="h" textLength="114.8" lengthAdjust="spacingAndGlyphs">73 23 58 9834</text><text x="791.8" y="956.3" font-size="13.2" class="h" textLength="47.8" lengthAdjust="spacingAndGlyphs">Smith</text><text x="824.8" y="972.4" font-size="13.2" class="h" textLength="30.2" lengthAdjust="spacingAndGlyphs">Jade</text><text x="788" y="994" font-size="13.2" class="h" textLength="86.3" lengthAdjust="spacingAndGlyphs">23.01.2000</text><text x="768.2" y="1014.6" font-size="13.2" class="h" textLength="195.8" lengthAdjust="spacingAndGlyphs">Piazza Città di Lombardia</text><text x="803" y="1058" font-size="14.2" class="h" textLength="115.7" lengthAdjust="spacingAndGlyphs">73 23 58 3482</text><text x="814" y="1077.8" font-size="13.2" class="h" textLength="51.4" lengthAdjust="spacingAndGlyphs">859CH</text><text x="899.6" y="1091.4" font-size="13.2" class="h" textLength="9.9" lengthAdjust="spacingAndGlyphs">B</text><text x="861.2" y="1113.7" font-size="13.2" class="h" textLength="85" lengthAdjust="spacingAndGlyphs">12.01.2093</text><rect x="441.8" y="347.6" width="251" height="710.4" fill="#f6fbf9" stroke="#727d82" stroke-width="1"/><path d="M442.2 371.4L692.8 371.4" stroke="#727d82" stroke-width="1.2"/><rect x="442.7" y="348.1" width="249.6" height="22.7" fill="#f7fbf9"/><text x="566.7" y="366.5" font-size="18.2" text-anchor="middle" class="t" textLength="190.9" lengthAdjust="spacingAndGlyphs">12. CIRCUMSTANCES</text><path d="M447.900 386H457L452.450 393.800Z" fill="#111"/><path d="M676.800 386H685.900L681.350 393.800Z" fill="#111"/><text x="447" y="412.7" font-size="14.5">A</text><text x="676.3" y="412.7" font-size="14.5">B</text><text x="566.8" y="393.8" font-size="11.4" text-anchor="middle" class="m" textLength="172.4" lengthAdjust="spacingAndGlyphs">Put a cross in each of the relevant</text><text x="566.8" y="407.7" font-size="11.4" text-anchor="middle" class="m" textLength="170" lengthAdjust="spacingAndGlyphs">boxes to help explain the drawing</text><text x="568.8" y="421.8" font-size="9.4" text-anchor="middle" class="i" textLength="111" lengthAdjust="spacingAndGlyphs">* delete where appropriate</text><rect x="446.6" y="429.3" width="11.4" height="11.4" fill="#fdfefd" stroke="#3a3a3a" stroke-width="1"/><rect x="675" y="429.3" width="11.4" height="11.4" fill="#fdfefd" stroke="#3a3a3a" stroke-width="1"/><text x="462" y="439.3" font-size="11.7">1</text><text x="668.9" y="439.3" font-size="11.7" text-anchor="end">1</text><text x="566.8" y="439.5" font-size="10.9" text-anchor="middle">* parked/stopped</text><rect x="446.6" y="442.9" width="11.4" height="11.4" fill="#fdfefd" stroke="#3a3a3a" stroke-width="1"/><rect x="675" y="442.9" width="11.4" height="11.4" fill="#fdfefd" stroke="#3a3a3a" stroke-width="1"/><text x="462" y="452.9" font-size="11.7">2</text><text x="668.9" y="452.9" font-size="11.7" text-anchor="end">2</text><text x="566.8" y="453.6" font-size="10.9" text-anchor="middle">* leaving a parking place/</text><text x="566.8" y="467" font-size="10.9" text-anchor="middle">opening the door</text><rect x="446.6" y="485.2" width="11.4" height="11.4" fill="#fdfefd" stroke="#3a3a3a" stroke-width="1"/><rect x="675" y="485.2" width="11.4" height="11.4" fill="#fdfefd" stroke="#3a3a3a" stroke-width="1"/><text x="462" y="496.7" font-size="11.7">3</text><text x="668.9" y="496.7" font-size="11.7" text-anchor="end">3</text><text x="566.8" y="497.5" font-size="10.9" text-anchor="middle">entering a parking place</text><rect x="446.6" y="511.6" width="11.4" height="11.4" fill="#fdfefd" stroke="#3a3a3a" stroke-width="1"/><path d="M448.8 514.2L456.4 521.8M456.2 514L448.6 521.8" stroke="#111" stroke-width="1.5"/><rect x="675" y="511.6" width="11.4" height="11.4" fill="#fdfefd" stroke="#3a3a3a" stroke-width="1"/><text x="462" y="522.8" font-size="11.7">4</text><text x="668.9" y="522.8" font-size="11.7" text-anchor="end">4</text><text x="566.8" y="522.3" font-size="10.9" text-anchor="middle">emerging from a car park,</text><text x="566.8" y="536" font-size="10.9" text-anchor="middle">from private ground, from a track</text><rect x="446.6" y="551.5" width="11.4" height="11.4" fill="#fdfefd" stroke="#3a3a3a" stroke-width="1"/><rect x="675" y="551.5" width="11.4" height="11.4" fill="#fdfefd" stroke="#3a3a3a" stroke-width="1"/><path d="M677.2 554.1L684.8 561.7M684.6 553.9L677 561.7" stroke="#111" stroke-width="1.5"/><text x="462" y="562.5" font-size="11.7">5</text><text x="668.9" y="562.5" font-size="11.7" text-anchor="end">5</text><text x="566.8" y="562" font-size="10.9" text-anchor="middle">entering a car park,</text><text x="566.8" y="575.6" font-size="10.9" text-anchor="middle">private ground, a track</text><rect x="446.6" y="590.7" width="11.4" height="11.4" fill="#fdfefd" stroke="#3a3a3a" stroke-width="1"/><rect x="675" y="590.7" width="11.4" height="11.4" fill="#fdfefd" stroke="#3a3a3a" stroke-width="1"/><text x="462" y="602" font-size="11.7">6</text><text x="668.9" y="602" font-size="11.7" text-anchor="end">6</text><text x="566.8" y="601.7" font-size="10.9" text-anchor="middle">entering a roundabout</text><rect x="446.6" y="616.7" width="11.4" height="11.4" fill="#fdfefd" stroke="#3a3a3a" stroke-width="1"/><rect x="675" y="616.7" width="11.4" height="11.4" fill="#fdfefd" stroke="#3a3a3a" stroke-width="1"/><text x="462" y="628" font-size="11.7">7</text><text x="668.9" y="628" font-size="11.7" text-anchor="end">7</text><text x="566.8" y="626.5" font-size="10.9" text-anchor="middle">circulating a roundabout</text><rect x="446.6" y="643.2" width="11.4" height="11.4" fill="#fdfefd" stroke="#3a3a3a" stroke-width="1"/><rect x="675" y="643.2" width="11.4" height="11.4" fill="#fdfefd" stroke="#3a3a3a" stroke-width="1"/><text x="462" y="654" font-size="11.7">8</text><text x="668.9" y="654" font-size="11.7" text-anchor="end">8</text><text x="566.8" y="651.3" font-size="10.9" text-anchor="middle">striking the rear of the other vehicle</text><text x="566.8" y="664.4" font-size="10.9" text-anchor="middle">while going in the same direction</text><text x="566.8" y="677.8" font-size="10.9" text-anchor="middle">and in the same lane</text><rect x="446.6" y="694.4" width="11.4" height="11.4" fill="#fdfefd" stroke="#3a3a3a" stroke-width="1"/><rect x="675" y="694.4" width="11.4" height="11.4" fill="#fdfefd" stroke="#3a3a3a" stroke-width="1"/><path d="M677.2 697L684.8 704.6M684.6 696.8L677 704.6" stroke="#111" stroke-width="1.5"/><text x="462" y="705.6" font-size="11.7">9</text><text x="668.9" y="705.6" font-size="11.7" text-anchor="end">9</text><text x="566.8" y="705.8" font-size="10.9" text-anchor="middle">going in the same direction</text><text x="566.8" y="719.4" font-size="10.9" text-anchor="middle">but in a different lane</text><rect x="446.6" y="735" width="11.4" height="11.4" fill="#fdfefd" stroke="#3a3a3a" stroke-width="1"/><rect x="675" y="735" width="11.4" height="11.4" fill="#fdfefd" stroke="#3a3a3a" stroke-width="1"/><text x="462" y="746" font-size="11.7">10</text><text x="668.9" y="746" font-size="11.7" text-anchor="end">10</text><text x="566.8" y="745.5" font-size="10.9" text-anchor="middle">changing lanes</text><rect x="446.6" y="759.8" width="11.4" height="11.4" fill="#fdfefd" stroke="#3a3a3a" stroke-width="1"/><rect x="675" y="759.8" width="11.4" height="11.4" fill="#fdfefd" stroke="#3a3a3a" stroke-width="1"/><text x="462" y="770.8" font-size="11.7">11</text><text x="668.9" y="770.8" font-size="11.7" text-anchor="end">11</text><text x="566.8" y="770.3" font-size="10.9" text-anchor="middle">overtaking</text><rect x="446.6" y="783.6" width="11.4" height="11.4" fill="#fdfefd" stroke="#3a3a3a" stroke-width="1"/><rect x="675" y="783.6" width="11.4" height="11.4" fill="#fdfefd" stroke="#3a3a3a" stroke-width="1"/><text x="462" y="794.8" font-size="11.7">12</text><text x="668.9" y="794.8" font-size="11.7" text-anchor="end">12</text><text x="566.8" y="794.3" font-size="10.9" text-anchor="middle">turning to the right</text><rect x="446.6" y="808.4" width="11.4" height="11.4" fill="#fdfefd" stroke="#3a3a3a" stroke-width="1"/><rect x="675" y="808.4" width="11.4" height="11.4" fill="#fdfefd" stroke="#3a3a3a" stroke-width="1"/><text x="462" y="819.5" font-size="11.7">13</text><text x="668.9" y="819.5" font-size="11.7" text-anchor="end">13</text><text x="566.8" y="819" font-size="10.9" text-anchor="middle">turning to the left</text><rect x="446.6" y="833" width="11.4" height="11.4" fill="#fdfefd" stroke="#3a3a3a" stroke-width="1"/><rect x="675" y="833" width="11.4" height="11.4" fill="#fdfefd" stroke="#3a3a3a" stroke-width="1"/><text x="462" y="844" font-size="11.7">14</text><text x="668.9" y="844" font-size="11.7" text-anchor="end">14</text><text x="566.8" y="843.5" font-size="10.9" text-anchor="middle">reversing</text><rect x="446.6" y="857.8" width="11.4" height="11.4" fill="#fdfefd" stroke="#3a3a3a" stroke-width="1"/><rect x="675" y="857.8" width="11.4" height="11.4" fill="#fdfefd" stroke="#3a3a3a" stroke-width="1"/><text x="462" y="868.8" font-size="11.7">15</text><text x="668.9" y="868.8" font-size="11.7" text-anchor="end">15</text><text x="566.8" y="868.3" font-size="10.9" text-anchor="middle">encroaching on a lane</text><text x="566.8" y="882" font-size="10.9" text-anchor="middle">reserved for circulation</text><text x="566.8" y="895" font-size="10.9" text-anchor="middle">in the opposite direction</text><rect x="446.6" y="912.4" width="11.4" height="11.4" fill="#fdfefd" stroke="#3a3a3a" stroke-width="1"/><rect x="675" y="912.4" width="11.4" height="11.4" fill="#fdfefd" stroke="#3a3a3a" stroke-width="1"/><text x="462" y="923.4" font-size="11.7">16</text><text x="668.9" y="923.4" font-size="11.7" text-anchor="end">16</text><text x="566.8" y="922.8" font-size="10.9" text-anchor="middle">coming from the right</text><text x="566.8" y="936.5" font-size="10.9" text-anchor="middle">(at road junctions)</text><rect x="446.6" y="950.8" width="11.4" height="11.4" fill="#fdfefd" stroke="#3a3a3a" stroke-width="1"/><rect x="675" y="950.8" width="11.4" height="11.4" fill="#fdfefd" stroke="#3a3a3a" stroke-width="1"/><text x="462" y="961.8" font-size="11.7">17</text><text x="668.9" y="961.8" font-size="11.7" text-anchor="end">17</text><text x="566.8" y="961.3" font-size="10.9" text-anchor="middle">had not observed a right</text><text x="566.8" y="974.9" font-size="10.9" text-anchor="middle">of way sign or a red light</text><rect x="446.6" y="993.6" width="17.2" height="16.6" fill="#fdfefd" stroke="#333" stroke-width="1.1"/><rect x="670" y="993.6" width="17.2" height="16.6" fill="#fdfefd" stroke="#333" stroke-width="1.1"/><text x="455.2" y="1007.2" font-size="14" class="h" text-anchor="middle">1</text><text x="678.6" y="1007.2" font-size="14" class="h" text-anchor="middle">2</text><path d="M477.400 996V1008.400L466.600 1002.200Z" fill="#111"/><path d="M656.700 996V1008.400L667.300 1002.200Z" fill="#111"/><text x="566.8" y="999.7" font-size="10.9" text-anchor="middle" class="b2" textLength="112.8" lengthAdjust="spacingAndGlyphs">state number of boxes</text><text x="566.8" y="1012.8" font-size="10.9" text-anchor="middle" class="b2" textLength="101.5" lengthAdjust="spacingAndGlyphs">marked with a cross</text><rect x="442.2" y="1060.6" width="250.6" height="27.4" fill="#f7fbf9" stroke="#727d82" stroke-width="1"/><text x="566.8" y="1069.2" font-size="11.4" text-anchor="middle" textLength="158" lengthAdjust="spacingAndGlyphs">Must be signed by BOTH drivers</text><text x="566.8" y="1079.2" font-size="7.6" text-anchor="middle" class="ig" textLength="223" lengthAdjust="spacingAndGlyphs">Does not constitute an admission of liability, but a summary of identities</text><text x="566.8" y="1087.2" font-size="7.6" text-anchor="middle" class="ig" textLength="188" lengthAdjust="spacingAndGlyphs">and of the facts which will speed up the settlement of claims</text><rect x="442.2" y="1095" width="250.6" height="16" fill="#f7fbf9" stroke="#727d82" stroke-width="1"/><rect x="442.2" y="1095" width="17.8" height="16" fill="#a6c3da" stroke="#727d82" stroke-width="1"/><text x="451.1" y="1106.6" font-size="10.8" class="b" text-anchor="middle" style="fill:#2b2b2b;stroke:#2b2b2b">13.</text><rect x="675.3" y="1095" width="17.5" height="16" fill="#f1ebb0" stroke="#727d82" stroke-width="1"/><text x="684" y="1106.6" font-size="10.8" class="b" text-anchor="middle" style="fill:#2b2b2b;stroke:#2b2b2b">13.</text><text x="465.7" y="1105.6" font-size="11" class="b" textLength="203.9" lengthAdjust="spacingAndGlyphs">Sketch of accident when impact occurred</text><rect x="442.2" y="1111" width="250.6" height="20" fill="#f8fcfa"/><text x="566.8" y="1120.8" font-size="7.4" text-anchor="middle" class="ig" textLength="212" lengthAdjust="spacingAndGlyphs">Indicate : 1. the layout of the road - 2. by arrows the direction of the vehicles A, B</text><text x="566.8" y="1130.6" font-size="7.4" text-anchor="middle" class="ig" textLength="236" lengthAdjust="spacingAndGlyphs">3. their positions at the time of impact - 4. the road signs - 5. names of the streets or roads</text><rect x="131.3" y="1135" width="157.1" height="171" fill="#fdf6fe"/><rect x="131.3" y="1135.6" width="157.1" height="45.2" fill="#d8dcec"/><path d="M131.3 1135.6L286.8 1135.6" stroke="#727d82" stroke-width="1"/><rect x="131.3" y="1135.8" width="18.2" height="16.9" fill="#a8b6dc" stroke="#727d82" stroke-width="1"/><text x="140.4" y="1148.4" font-size="11" class="b" text-anchor="middle" style="fill:#222;stroke:#222">10.</text><text x="151.3" y="1148.6" font-size="11.4" textLength="91.7" lengthAdjust="spacingAndGlyphs">Indicate the point of</text><text x="151.3" y="1162.6" font-size="11.4" textLength="114.6" lengthAdjust="spacingAndGlyphs">initial impact to vehicle A</text><text x="151.3" y="1176.6" font-size="11.4" textLength="66.1" lengthAdjust="spacingAndGlyphs">by an arrow ➝</text><path d="M152 1181.6L270.5 1181.6" stroke="#555" stroke-width="1"/><g transform="translate(0 0)" fill="none" stroke="#3a3a3a" stroke-width=".9" stroke-linecap="round"><path d="M150 1224v8" stroke-width="3.200" stroke="#333"/><path d="M150 1279v8.500" stroke-width="3.200" stroke="#333"/><path d="M137.500 1240.500q6.500-3 12.500-1.500q6-1.500 12.500 1.500"/><path d="M147 1233.500h6l.5 5.500h-7z" fill="#fdf6fe"/><path d="M150 1239c-4.500 3-6 10-5 15l-1 12 2 2v11h8v-11l2-2-1-12c1-5-.500-12-5-15z" fill="#fdf6fe"/><path d="M146 1254q4 3 8 0M146 1268h8"/><path d="M182.500 1206q15.700-6.500 31.400 0" stroke-width="1.600" stroke="#4a4a4a"/><path d="M184.500 1293q13.700 5 27.400 0" stroke-width="1.600" stroke="#4a4a4a"/><path d="M185.500 1205.500c-2 12-4 24-4 40c0 20 1.500 36 4.500 46q12.200 3.500 24.400 0c3-10 4.500-26 4.500-46c0-16-2-28-4-40q-12.700-3.500-25.400 0z" fill="#fdf6fe"/><path d="M186.500 1232q11.700-5.500 23.400 0c2 9 2 22 0 32q-11.700 4.500-23.400 0c-2-10-2-23 0-32z"/><path d="M183 1236q1.500-3 3.500-4M213.400 1236q-1.500-3-3.500-4M188 1207l-2 13M208.400 1207l2 13"/><path d="M190 1276.500h16.400l-1.500 11h-13.400z"/><path d="M237.500 1195.500q2-3 5-3h29q3 0 5 3" stroke-width="1.600" stroke="#4a4a4a"/><path d="M240.500 1194.500l-3.500 20.500-3 6v66q0 6.500 6 6.500h34q6 0 6-6.500v-66l-3-6-3.500-20.500z" fill="#fdf6fe"/><path d="M237 1215q20-3.500 40 0M234.500 1221.500q22.500-3 45 0M245.500 1195.500l.5 12M268.500 1195.500l-.5 12M241 1211.500q16-2 32 0"/></g><rect x="131.3" y="1310" width="155.5" height="21" fill="#d2e1ea" stroke="#727d82" stroke-width="1"/><rect x="131.3" y="1310" width="18.2" height="16.5" fill="#a6c3da" stroke="#727d82" stroke-width="1"/><text x="140.4" y="1322.1" font-size="11" class="b" text-anchor="middle" style="fill:#222;stroke:#222">11.</text><text x="151.3" y="1322.3" font-size="11.4" textLength="69.7" lengthAdjust="spacingAndGlyphs">Visible damage</text><text x="151.3" y="1336" font-size="11.4" textLength="55.7" lengthAdjust="spacingAndGlyphs">to vehicle A:</text><rect x="846.2" y="1135" width="157.1" height="171" fill="#fdf6fe"/><rect x="846.2" y="1135.6" width="157.1" height="45.2" fill="#fcf0dc"/><path d="M846.2 1135.6L1001.7 1135.6" stroke="#727d82" stroke-width="1"/><rect x="846.2" y="1135.8" width="18.2" height="16.9" fill="#f3e6a2" stroke="#727d82" stroke-width="1"/><text x="855.3" y="1148.4" font-size="11" class="b" text-anchor="middle" style="fill:#222;stroke:#222">10.</text><text x="866.2" y="1148.6" font-size="11.4" textLength="91.7" lengthAdjust="spacingAndGlyphs">Indicate the point of</text><text x="866.2" y="1162.6" font-size="11.4" textLength="114.6" lengthAdjust="spacingAndGlyphs">initial impact to vehicle B</text><text x="866.2" y="1176.6" font-size="11.4" textLength="66.1" lengthAdjust="spacingAndGlyphs">by an arrow ➝</text><path d="M866.9 1181.6L985.4 1181.6" stroke="#555" stroke-width="1"/><g transform="translate(714.9 0)" fill="none" stroke="#3a3a3a" stroke-width=".9" stroke-linecap="round"><path d="M150 1224v8" stroke-width="3.200" stroke="#333"/><path d="M150 1279v8.500" stroke-width="3.200" stroke="#333"/><path d="M137.500 1240.500q6.500-3 12.500-1.500q6-1.500 12.500 1.500"/><path d="M147 1233.500h6l.5 5.500h-7z" fill="#fdf6fe"/><path d="M150 1239c-4.500 3-6 10-5 15l-1 12 2 2v11h8v-11l2-2-1-12c1-5-.500-12-5-15z" fill="#fdf6fe"/><path d="M146 1254q4 3 8 0M146 1268h8"/><path d="M182.500 1206q15.700-6.500 31.400 0" stroke-width="1.600" stroke="#4a4a4a"/><path d="M184.500 1293q13.700 5 27.400 0" stroke-width="1.600" stroke="#4a4a4a"/><path d="M185.500 1205.500c-2 12-4 24-4 40c0 20 1.500 36 4.500 46q12.200 3.500 24.400 0c3-10 4.500-26 4.500-46c0-16-2-28-4-40q-12.700-3.500-25.400 0z" fill="#fdf6fe"/><path d="M186.500 1232q11.700-5.500 23.400 0c2 9 2 22 0 32q-11.700 4.500-23.400 0c-2-10-2-23 0-32z"/><path d="M183 1236q1.500-3 3.500-4M213.400 1236q-1.500-3-3.500-4M188 1207l-2 13M208.400 1207l2 13"/><path d="M190 1276.500h16.400l-1.500 11h-13.400z"/><path d="M237.500 1195.500q2-3 5-3h29q3 0 5 3" stroke-width="1.600" stroke="#4a4a4a"/><path d="M240.500 1194.500l-3.500 20.500-3 6v66q0 6.500 6 6.500h34q6 0 6-6.500v-66l-3-6-3.500-20.500z" fill="#fdf6fe"/><path d="M237 1215q20-3.500 40 0M234.500 1221.500q22.500-3 45 0M245.500 1195.500l.5 12M268.500 1195.500l-.5 12M241 1211.500q16-2 32 0"/></g><rect x="846.2" y="1310" width="155.5" height="21" fill="#f5f6d2" stroke="#727d82" stroke-width="1"/><rect x="846.2" y="1310" width="18.2" height="16.5" fill="#f1ebb0" stroke="#727d82" stroke-width="1"/><text x="855.3" y="1322.1" font-size="11" class="b" text-anchor="middle" style="fill:#222;stroke:#222">11.</text><text x="866.2" y="1322.3" font-size="11.4" textLength="69.7" lengthAdjust="spacingAndGlyphs">Visible damage</text><text x="866.2" y="1336" font-size="11.4" textLength="55.7" lengthAdjust="spacingAndGlyphs">to vehicle B:</text><path d="M277.300 1285.200L270 1299.200L277.500 1297.700L280 1303.400L282.800 1302.600L280.800 1296.800L284.600 1296.200Z" fill="#111"/><path d="M991.800 1160.800C998.500 1165.500 999.500 1174 992 1183.500" stroke="#111" stroke-width="2.600" fill="none" stroke-linecap="round"/><path d="M983.200 1190.800L985.600 1179.300L997.600 1185.600Z" fill="#111"/><rect x="841.8" y="1131" width="2" height="200" fill="#f0e06a"/><rect x="294" y="1135" width="544.5" height="196" fill="#fdf6fe"/><path d="M339 1135V1331" class="g"/><path d="M384.5 1135V1331" class="g"/><path d="M430 1135V1331" class="g"/><path d="M475.3 1135V1331" class="g"/><path d="M520.6 1135V1331" class="g"/><path d="M566 1135V1331" class="g"/><path d="M611 1135V1331" class="g"/><path d="M656.5 1135V1331" class="g"/><path d="M701.6 1135V1331" class="g"/><path d="M747 1135V1331" class="g"/><path d="M792.2 1135V1331" class="g"/><path d="M294 1177.2H838.500" class="g"/><path d="M294 1219.4H838.500" class="g"/><path d="M294 1261.4H838.500" class="g"/><path d="M294 1303.6H838.500" class="g"/><path d="M294 1135.4L838.5 1135.4" stroke="#727d82" stroke-width="1"/><path d="M294.4 1135L294.4 1331" stroke="#727d82" stroke-width="1"/><path d="M838 1135L838 1331" stroke="#727d82" stroke-width="1"/><path d="M314.700 1254.500H386.900M667.200 1254.200H739.300M765.700 1254.200H838.500" stroke="#0a0a0a" fill="none" stroke-width="7.800"/><rect x="428.500" y="1218.800" width="123.200" height="63.600" stroke="#0a0a0a" fill="none" stroke-width="4.300"/><path d="M552.400 1218.300L513.800 1191.300M552.300 1283L525 1311.600" stroke="#0a0a0a" fill="none" stroke-width="4"/><text x="481.6" y="1257.5" font-size="21" class="h" textLength="18.7" lengthAdjust="spacingAndGlyphs">B</text><path d="M558 1283C562.500 1275.500 573 1271.500 580 1278C583 1281 585 1284 587.200 1287.200" stroke="#0a0a0a" fill="none" stroke-width="2.900"/><path d="M594.200 1294.400L581 1288L593.400 1280.400Z" fill="#0a0a0a"/><path d="M641 1340.400L596.200 1295.600L640.700 1251.100L722 1332.400" stroke="#0a0a0a" fill="none" stroke-width="4.300" stroke-linejoin="miter"/><path d="M717.800 1288.800V1335" stroke="#0a0a0a" fill="none" stroke-width="4"/><text x="640.2" y="1315.2" font-size="21" class="h" textLength="19.8" lengthAdjust="spacingAndGlyphs">A</text><rect x="126.25" y="210.05" width="256.1" height="22.3" fill="#6bd08a" fill-opacity="0.07" stroke="#6bd08a" stroke-width="3.3"/><rect x="128.45" y="237.05" width="210.1" height="38.3" fill="#6bd08a" fill-opacity="0" stroke="#6bd08a" stroke-width="3.3"/><rect x="344.15" y="236.85" width="293" height="38.5" fill="#6bd08a" fill-opacity="0" stroke="#6bd08a" stroke-width="3.3"/><rect x="641.45" y="237.25" width="143.9" height="36.8" fill="#6bd08a" fill-opacity="0" stroke="#6bd08a" stroke-width="3.3"/><rect x="128.95" y="280.25" width="300" height="60.1" fill="#6bd08a" fill-opacity="0" stroke="#6bd08a" stroke-width="3.3"/><rect x="440.15" y="279.65" width="564.4" height="60.7" fill="#6bd08a" fill-opacity="0" stroke="#6bd08a" stroke-width="3.3"/><rect x="129.65" y="347.05" width="307.3" height="160.1" fill="#6bd08a" fill-opacity="0" stroke="#6bd08a" stroke-width="3.3"/><rect x="441.05" y="350.85" width="253.3" height="707.1" fill="#6bd08a" fill-opacity="0" stroke="#6bd08a" stroke-width="3.3"/><rect x="698.75" y="355.45" width="307.8" height="145.9" fill="#6bd08a" fill-opacity="0" stroke="#6bd08a" stroke-width="3.3"/><rect x="129.65" y="511.65" width="305.5" height="139.5" fill="#6bd08a" fill-opacity="0" stroke="#6bd08a" stroke-width="3.3"/><rect x="699.05" y="512.45" width="305.7" height="138.5" fill="#6bd08a" fill-opacity="0" stroke="#6bd08a" stroke-width="3.3"/><rect x="129.65" y="656.45" width="305.5" height="257.8" fill="#6bd08a" fill-opacity="0" stroke="#6bd08a" stroke-width="3.3"/><rect x="699.05" y="657.05" width="305.7" height="255.5" fill="#6bd08a" fill-opacity="0" stroke="#6bd08a" stroke-width="3.3"/><rect x="128.65" y="917.35" width="306.5" height="212.4" fill="#6bd08a" fill-opacity="0" stroke="#6bd08a" stroke-width="3.3"/><rect x="699.05" y="919.05" width="305.7" height="209.5" fill="#6bd08a" fill-opacity="0" stroke="#6bd08a" stroke-width="3.3"/><rect x="441.05" y="1057.85" width="251.7" height="31.7" fill="#6bd08a" fill-opacity="0" stroke="#6bd08a" stroke-width="3.3"/><rect x="441.05" y="1092.85" width="253.3" height="37.7" fill="#6bd08a" fill-opacity="0" stroke="#6bd08a" stroke-width="3.3"/><rect x="734.95" y="220.15" width="53.7" height="14.4" fill="#6a5af5" fill-opacity="0.015" stroke="#6a5af5" stroke-width="2.5"/><rect x="129.65" y="1133.25" width="158.3" height="172.1" fill="#ea68f5" fill-opacity="0" stroke="#ea68f5" stroke-width="3.3"/><rect x="292.85" y="1133.25" width="547.3" height="205.1" fill="#ea68f5" fill-opacity="0" stroke="#ea68f5" stroke-width="3.3"/><rect x="845.25" y="1135.25" width="158.7" height="169.9" fill="#ea68f5" fill-opacity="0" stroke="#ea68f5" stroke-width="3.3"/><rect x="129.65" y="1308.65" width="158.3" height="29.7" fill="#6bd08a" fill-opacity="0" stroke="#6bd08a" stroke-width="3.3"/><rect x="845.25" y="1310.25" width="158.7" height="28.1" fill="#6bd08a" fill-opacity="0" stroke="#6bd08a" stroke-width="3.3"/></svg><div id="panel" class="a"><div id="tog" class="a"><div class="a on"></div><span class="a tb" style="left:23.600px;top:14.600px;letter-spacing:1.650px">Markdown</span><span class="a tb" style="left:180.500px;top:14.600px;color:#4fb06d;-webkit-text-stroke:.3px #4fb06d;letter-spacing:-.4px">JSON</span></div><svg class="a" style="left:1328px;top:34px" width="24" height="24" viewBox="2428 224 24 24" fill="none" stroke="#18181b" stroke-width="1.700" stroke-linecap="round" stroke-linejoin="round"><path d="M2431.200 238.500V241.600A1.600 1.600 0 0 0 2432.800 243.200H2446.100A1.600 1.600 0 0 0 2447.700 241.600V238.500M2439.400 227.200V238M2435.600 234L2439.400 237.800L2443.200 234"/></svg><svg class="a" style="left:1388px;top:34px" width="24" height="24" viewBox="2488 224 24 24" fill="none" stroke="#18181b" stroke-width="1.700" stroke-linecap="round" stroke-linejoin="round"><rect x="2490.800" y="2231.200" width="11.800" height="11.800" rx="1.200" transform="translate(0 -2000)"/><path d="M2495.200 231V228.400A1.200 1.200 0 0 1 2496.400 227.200H2505.800A1.200 1.200 0 0 1 2507 228.400V237.800A1.200 1.200 0 0 1 2505.800 239H2503"/></svg><div id="ed" class="a"><div class="a" style="left:0;top:0;width:1431.500px;height:1060px;overflow:hidden"><pre><span class="b1">{</span>
  <span class="k">"markdown"</span>: <span class="s">"ACCIDENT STATEMENT &lt;!-- text, from page 0 (l=0.019,t=0.013,r=0.296,b=0.032), with ID 9d08c2e7-8b90-47eb-b521-8c58c750f242 --&gt;\n\nSheet 1/2 &lt;!-- marginalia, from page 0</span>
  <span class="k">"chunks"</span>: <span class="b2">[</span>
    <span class="b3">{</span>
      <span class="k">"text"</span>: <span class="s">"ACCIDENT STATEMENT"</span>,
      <span class="k">"grounding"</span>: <span class="b1">[</span>
        <span class="b2">{</span>
          <span class="k">"box"</span>: <span class="b3">{</span>
            <span class="k">"l"</span>: <span class="n">0.0188329815864563</span>,
            <span class="k">"t"</span>: <span class="n">0.013232757337391376</span>,
            <span class="k">"r"</span>: <span class="n">0.29552924633026123</span>,
            <span class="k">"b"</span>: <span class="n">0.03246883675456047</span>
          <span class="b3">}</span>,
          <span class="k">"page"</span>: <span class="n">0</span>
        <span class="b2">}</span>
      <span class="b1">]</span>,
      <span class="k">"chunk_type"</span>: <span class="s">"text"</span>,
      <span class="k">"chunk_id"</span>: <span class="s">"9d08c2e7-8b90-47eb-b521-8c58c750f242"</span>
    <span class="b3">}</span>,
    <span class="b3">{</span>
      <span class="k">"text"</span>: <span class="s">"Sheet 1/2"</span>,
      <span class="k">"grounding"</span>: <span class="b1">[</span>
        <span class="b2">{</span>
          <span class="k">"box"</span>: <span class="b3">{</span>
            <span class="k">"l"</span>: <span class="n">0.6687036752700806</span>,
            <span class="k">"t"</span>: <span class="n">0.021273983642458916</span>,
            <span class="k">"r"</span>: <span class="n">0.7290363311767578</span>,
            <span class="k">"b"</span>: <span class="n">0.03436321020126343</span>
          <span class="b3">}</span>,
          <span class="k">"page"</span>: <span class="n">0</span>
        <span class="b2">}</span>
      <span class="b1">]</span>,
      <span class="k">"chunk_type"</span>: <span class="s">"marginalia"</span>,
      <span class="k">"chunk_id"</span>: <span class="s">"b4613ec2-f420-4289-8ec1-6f052baf6f62"</span>
    <span class="b3">}</span>,
    <span class="b3">{</span>
      <span class="k">"text"</span>: <span class="s">"1. Date of accident Time"</span>,</pre></div><div class="a" style="left:1410.800px;top:0;width:22px;height:1060px;border-left:1px solid #eceef2"></div><div class="a" style="left:1412.600px;top:0;width:18.500px;height:3px;background:#424242;border-radius:0 3px 0 0"></div><div class="a" style="left:1432.300px;top:0;width:1.500px;height:1060px;background:#eef1f5"></div><div class="a" style="left:1433.200px;top:-1.500px;width:8.800px;height:90px;border-radius:5px;background:#94a3b8"></div></div></div><div class="a" style="left:2490px;top:1252px;width:60px;height:60px;border-radius:50%;background:#52b172;box-shadow:0 3px 8px rgba(0,0,0,.18)"></div><svg class="a" style="left:2504px;top:1264px" width="32" height="34" viewBox="2504 1264 32 34" fill="none" stroke="#fff" stroke-width="2.700" stroke-linejoin="round"><rect x="2507.800" y="1271.800" width="24.400" height="23.600" rx="2"/><path d="M2507.800 1276.600H2532.200M2512.600 1267.200V1271.800M2527.600 1267.200V1271.800"/><circle cx="2523.500" cy="1287.300" r="3.700" fill="#fff" stroke="none"/><path d="M2507.800 1276.600H2532.200V1295.400H2507.800Z" fill="none"/></svg><div class="a" style="left:470px;top:1332px;width:1620px;height:60px;border-radius:30px;box-shadow:0 -4px 24px rgba(60,70,90,.11)"></div><div class="a" id="tick" style="left:107px;top:190px;width:1.200px;height:4.500px;background:#6b7280"></div></body></html>
